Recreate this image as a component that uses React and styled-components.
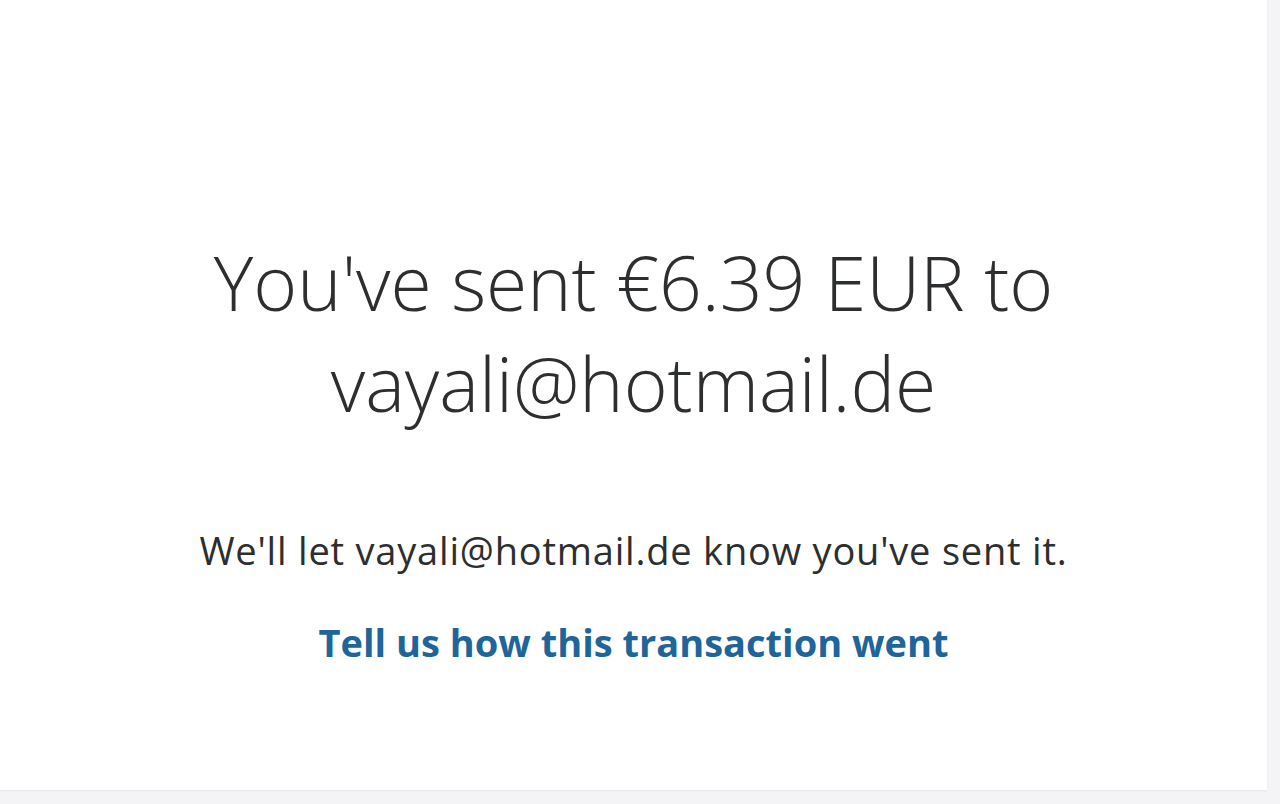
import React from 'react';
import styled, { createGlobalStyle } from 'styled-components';

const Global = createGlobalStyle`
  html, body {
    margin: 0;
    padding: 0;
    background: #f4f4f7;
  }
  body {
    font-family: "Open Sans", Lato, sans-serif;
  }
`;

const Page = styled.div`
  width: 1280px;
  height: 804px;
  background: #f4f4f7;
`;

const Card = styled.div`
  width: 1267px;
  height: 790px;
  background: #fff;
  box-shadow: 0 1px 2px rgba(0, 0, 0, 0.06);
  display: flex;
  flex-direction: column;
  align-items: center;
  box-sizing: border-box;
  padding-top: 232px;
`;

const Heading = styled.h1`
  margin: 0;
  font-family: "Open Sans", sans-serif;
  font-weight: 300;
  font-size: 75px;
  line-height: 101px;
  color: #2c2e2f;
  text-align: center;
  width: 1000px;
`;

const Note = styled.p`
  margin: 96px 0 0;
  font-family: "Open Sans", sans-serif;
  font-size: 38px;
  letter-spacing: 0.8px;
  line-height: 40px;
  color: #2c2e2f;
`;

const Feedback = styled.a`
  margin-top: 52px;
  font-family: "Open Sans", sans-serif;
  font-weight: 700;
  font-size: 38px;
  line-height: 40px;
  color: #1f659a;
  text-decoration: none;
  cursor: pointer;
`;

export default function App() {
  return (
    <Page>
      <Global />
      <Card>
        <Heading>
          You've sent €6.39 EUR to
          <br />
          vayali@hotmail.de
        </Heading>
        <Note>We'll let vayali@hotmail.de know you've sent it.</Note>
        <Feedback>Tell us how this transaction went</Feedback>
      </Card>
    </Page>
  );
}
